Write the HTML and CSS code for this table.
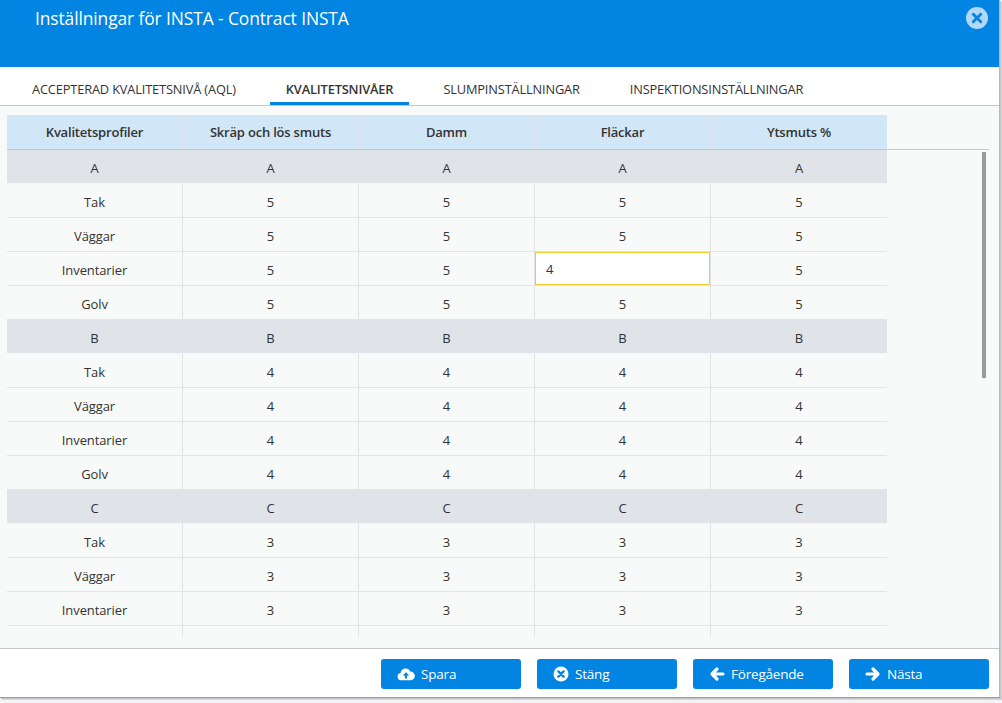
FILE: index.html
```html
<!DOCTYPE html>
<html lang="sv">
<head>
<meta charset="utf-8">
<title>Inställningar för INSTA</title>
<link rel="stylesheet" href="styles.css">
</head>
<body>
<div class="dialog">
  <header class="dlg-header">
    <h1 class="dlg-title">Inställningar för INSTA - Contract INSTA</h1>
    <button class="close-btn" aria-label="Stäng">
      <svg viewBox="0 0 22 22" width="22" height="22"><circle cx="11" cy="11" r="11" fill="#b3d8f6"/><path d="M7.3 7.3l7.4 7.4M14.7 7.3l-7.4 7.4" stroke="#0a84e0" stroke-width="3" stroke-linecap="round"/></svg>
    </button>
  </header>
  <nav class="tabs">
    <div class="tab">Accepterad kvalitetsnivå (AQL)</div>
    <div class="tab active">Kvalitetsnivåer</div>
    <div class="tab">Slumpinställningar</div>
    <div class="tab">Inspektionsinställningar</div>
  </nav>
  <main class="content">
    <div class="thead">
      <div class="th">Kvalitetsprofiler</div>
      <div class="th">Skräp och lös smuts</div>
      <div class="th">Damm</div>
      <div class="th">Fläckar</div>
      <div class="th">Ytsmuts %</div>
    </div>
    <div class="tbody-wrap">
      <div class="tbody">
        <div class="rows">
          <div class="row group"><div class="td">A</div><div class="td">A</div><div class="td">A</div><div class="td">A</div><div class="td">A</div></div>
          <div class="row"><div class="td">Tak</div><div class="td">5</div><div class="td">5</div><div class="td">5</div><div class="td">5</div></div>
          <div class="row"><div class="td">Väggar</div><div class="td">5</div><div class="td">5</div><div class="td">5</div><div class="td">5</div></div>
          <div class="row"><div class="td">Inventarier</div><div class="td">5</div><div class="td">5</div><div class="td td-edit"><input class="cell-input" type="text" value="4"></div><div class="td">5</div></div>
          <div class="row"><div class="td">Golv</div><div class="td">5</div><div class="td">5</div><div class="td">5</div><div class="td">5</div></div>

          <div class="row group"><div class="td">B</div><div class="td">B</div><div class="td">B</div><div class="td">B</div><div class="td">B</div></div>
          <div class="row"><div class="td">Tak</div><div class="td">4</div><div class="td">4</div><div class="td">4</div><div class="td">4</div></div>
          <div class="row"><div class="td">Väggar</div><div class="td">4</div><div class="td">4</div><div class="td">4</div><div class="td">4</div></div>
          <div class="row"><div class="td">Inventarier</div><div class="td">4</div><div class="td">4</div><div class="td">4</div><div class="td">4</div></div>
          <div class="row"><div class="td">Golv</div><div class="td">4</div><div class="td">4</div><div class="td">4</div><div class="td">4</div></div>

          <div class="row group"><div class="td">C</div><div class="td">C</div><div class="td">C</div><div class="td">C</div><div class="td">C</div></div>
          <div class="row"><div class="td">Tak</div><div class="td">3</div><div class="td">3</div><div class="td">3</div><div class="td">3</div></div>
          <div class="row"><div class="td">Väggar</div><div class="td">3</div><div class="td">3</div><div class="td">3</div><div class="td">3</div></div>
          <div class="row"><div class="td">Inventarier</div><div class="td">3</div><div class="td">3</div><div class="td">3</div><div class="td">3</div></div>
          <div class="row"><div class="td">Golv</div><div class="td">3</div><div class="td">3</div><div class="td">3</div><div class="td">3</div></div>
        </div>
      </div>
      <div class="scroll-thumb"></div>
    </div>
  </main>
  <footer class="dlg-footer">
    <button class="btn">
      <svg class="ico" viewBox="0 0 18 16" width="18" height="16"><path d="M4.2 14.2a3.6 3.6 0 0 1-.6-7.15A5 5 0 0 1 13.2 5.6a3.6 3.6 0 0 1 .6 8.6z" fill="#fff"/><path d="M9 6.2l-3.2 3.3h2.1v3h2.2v-3h2.1z" fill="#0184e2"/></svg>
      <span>Spara</span>
    </button>
    <button class="btn">
      <svg class="ico" viewBox="0 0 16 16" width="16" height="16"><circle cx="8" cy="8" r="7.5" fill="#fff"/><path d="M5.4 5.4l5.2 5.2M10.6 5.4l-5.2 5.2" stroke="#0184e2" stroke-width="2.4" stroke-linecap="round"/></svg>
      <span>Stäng</span>
    </button>
    <button class="btn">
      <svg class="ico" viewBox="0 0 16 16" width="16" height="16"><path d="M14 8H3.5M8 3L3 8l5 5" fill="none" stroke="#fff" stroke-width="3.2" stroke-linecap="round" stroke-linejoin="round"/></svg>
      <span>Föregående</span>
    </button>
    <button class="btn">
      <svg class="ico" viewBox="0 0 16 16" width="16" height="16"><path d="M2 8h10.5M8 3l5 5-5 5" fill="none" stroke="#fff" stroke-width="3.2" stroke-linecap="round" stroke-linejoin="round"/></svg>
      <span>Nästa</span>
    </button>
  </footer>
</div>
</body>
</html>
```

FILE: styles.css
```css
* { box-sizing: border-box; }

html, body {
  margin: 0;
  padding: 0;
  width: 1002px;
  height: 703px;
  overflow: hidden;
}

body {
  background: #f4f4f4;
  font-family: "Open Sans", "Noto Sans", "DejaVu Sans", sans-serif;
  color: #333;
}

.dialog {
  width: 1000px;
  height: 698px;
  display: flex;
  flex-direction: column;
  background: #fff;
  border-right: 1px solid #b6b8bc;
  border-bottom: 1px solid #9a9ca0;
  box-shadow: 1px 1px 0 #c4c6ca, 2px 2px 0 #d4d6d8;
}

.dlg-header {
  height: 67px;
  flex: 0 0 67px;
  background: #0184e2;
  display: flex;
  align-items: flex-start;
  justify-content: space-between;
  padding: 0 11px 0 35px;
}

.dlg-title {
  margin: 6px 0 0;
  font-size: 17.4px;
  font-weight: 400;
  color: #fff;
  letter-spacing: -0.1px;
}

.close-btn {
  margin-top: 7px;
  padding: 0;
  border: 0;
  background: transparent;
  width: 22px;
  height: 22px;
  display: block;
}
.close-btn svg { display: block; }

.tabs {
  flex: 0 0 39px;
  height: 39px;
  display: flex;
  gap: 18px;
  padding-left: 16px;
  border-bottom: 1px solid #c4c8ce;
  background: #fff;
}

.tab {
  padding: 13px 16px 0;
  font-size: 12.8px;
  text-transform: uppercase;
  color: #333;
  letter-spacing: -0.15px;
  white-space: nowrap;
  border-bottom: 3px solid transparent;
}

.tab.active {
  font-weight: 600;
  border-bottom-color: #0184e2;
}

.content {
  flex: 1 1 auto;
  background: #f8faf9;
  padding: 9px 0 12px 7px;
  border-bottom: 1px solid #c4c8ce;
  display: flex;
  flex-direction: column;
  min-height: 0;
}

.thead {
  display: grid;
  grid-template-columns: 175px 176px 176px 176px 177px;
  width: 880px;
  height: 34px;
  flex: 0 0 34px;
  background: #d1e6f6;
}

.th {
  display: flex;
  align-items: center;
  justify-content: center;
  font-size: 13px;
  font-weight: 600;
  color: #333;
  border-left: 1px solid #dce5ee;
  letter-spacing: -0.2px;
}
.th:first-child { border-left: 0; }

.tbody-wrap {
  position: relative;
  flex: 1 1 auto;
  min-height: 0;
  width: 982px;
  border-top: 1px solid #c4c8ce;
}

.tbody {
  height: 100%;
  overflow: hidden;
}

.scroll-thumb {
  position: absolute;
  right: 3px;
  top: 2px;
  width: 4px;
  height: 226px;
  background: #9a9a9a;
}

.rows { width: 880px; }

.row {
  display: grid;
  grid-template-columns: 175px 176px 176px 176px 177px;
  height: 34px;
  border-bottom: 1px solid #e2e5e8;
}

.row.group { background: #e0e4e8; border-bottom-color: #f4f6f7; }

.td {
  display: flex;
  align-items: center;
  justify-content: center;
  padding-top: 2px;
  font-size: 13px;
  color: #333;
  border-left: 1px solid #dfe2e7;
  letter-spacing: -0.1px;
}
.td:first-child { border-left: 0; }
.row.group .td { border-left-color: #e0e4e8; }

.td-edit { align-items: stretch; padding-top: 0; }

.cell-input {
  width: 100%;
  height: 100%;
  margin: 0;
  border: 1px solid #f5cb2a;
  background: #fff;
  padding: 1px 10px 0;
  font: inherit;
  font-size: 13px;
  color: #1d3a5a;
  outline: none;
}

.dlg-footer {
  flex: 0 0 48px;
  height: 48px;
  display: flex;
  justify-content: flex-end;
  align-items: flex-start;
  gap: 16px;
  padding: 10px 10px 0 0;
  background: #fff;
}

.btn {
  width: 140px;
  height: 30px;
  border: 0;
  border-radius: 3px;
  background: #0184e2;
  color: #fff;
  font-family: "Open Sans", "Noto Sans", sans-serif;
  font-size: 13.5px;
  display: flex;
  align-items: center;
  gap: 6px;
  padding: 0 0 0 16px;
  letter-spacing: -0.2px;
}

.btn .ico { display: block; flex: 0 0 auto; }
```
